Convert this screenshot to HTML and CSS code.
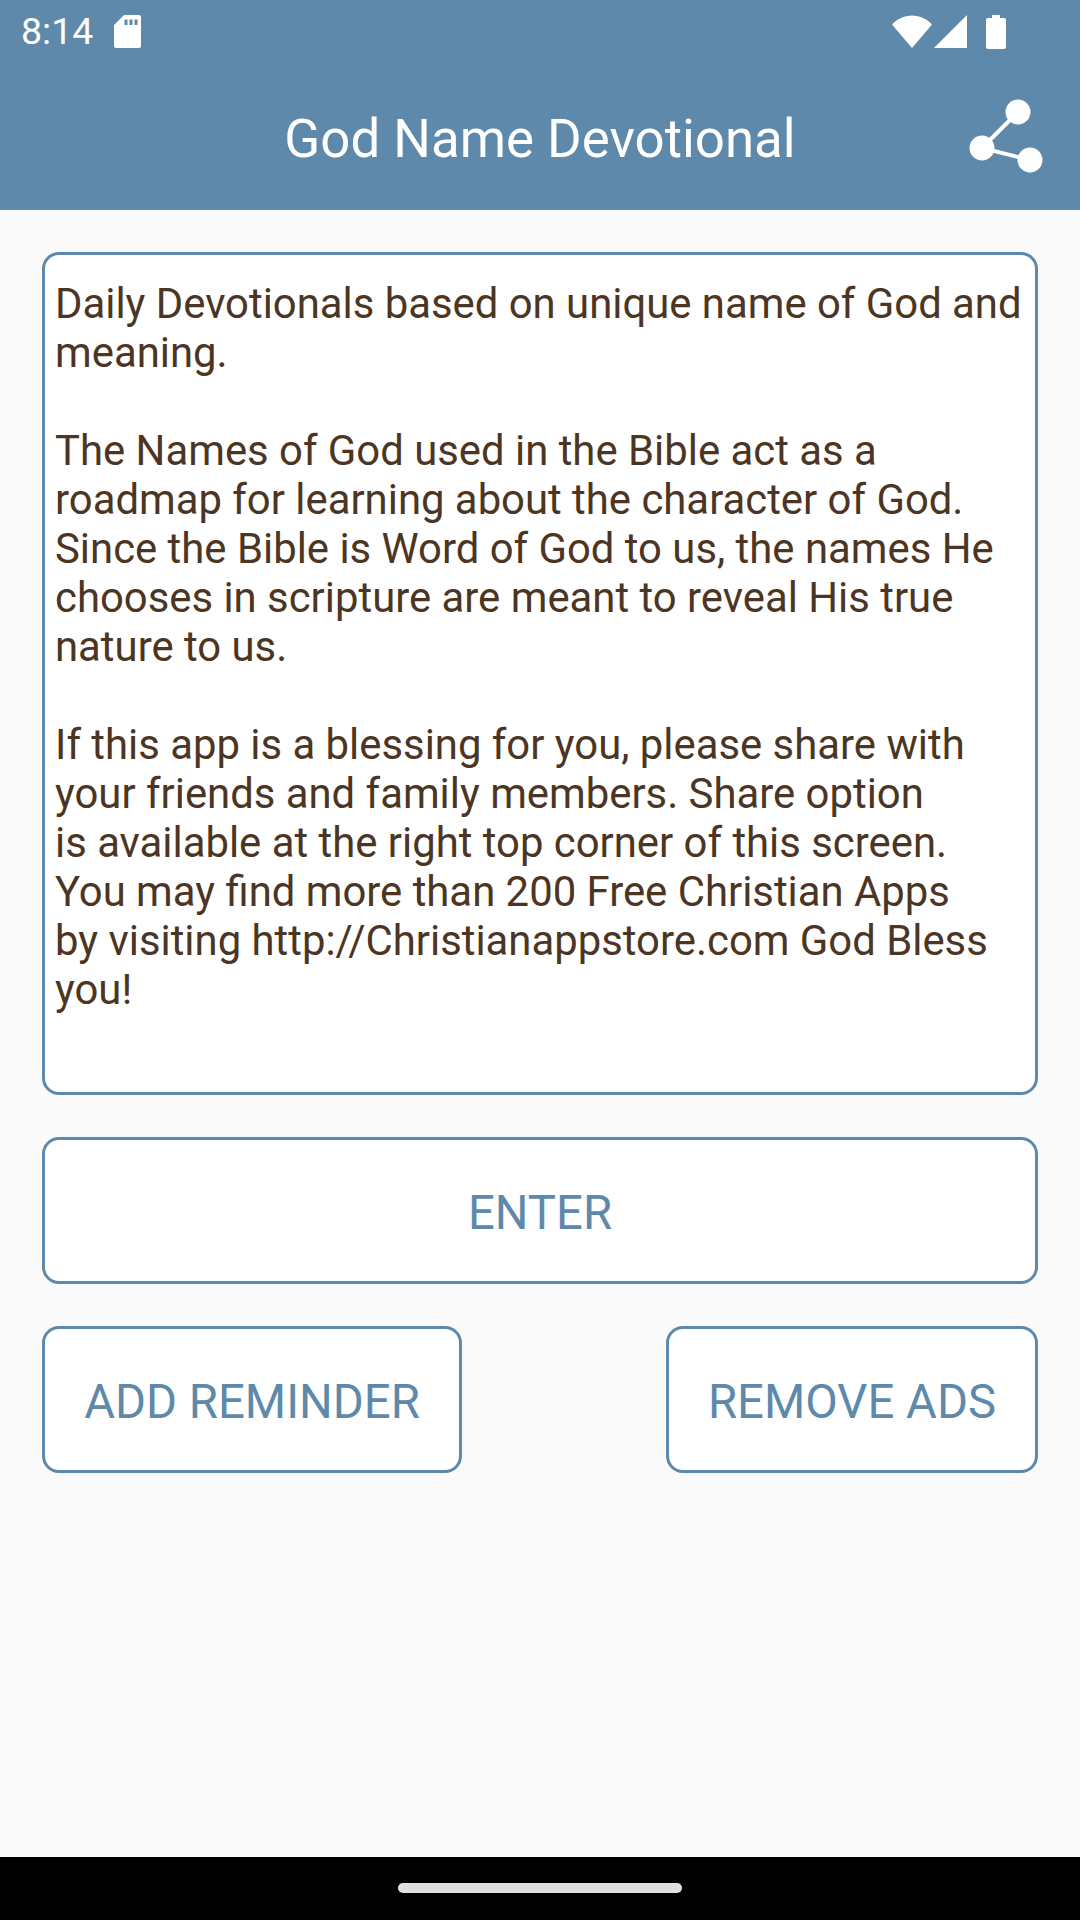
FILE: index.html
```html
<!DOCTYPE html>
<html lang="en">
<head>
<meta charset="utf-8">
<title>God Name Devotional</title>
<link rel="stylesheet" href="styles.css">
</head>
<body>
<div class="screen">
  <header class="appbar">
    <div class="status">
      <div class="status-left">
        <span class="time">8:14</span>
        <svg class="sd" viewBox="0 0 27 33"><path fill="#fff" fill-rule="evenodd" d="M10 0H25a2 2 0 0 1 2 2V31a2 2 0 0 1-2 2H2a2 2 0 0 1-2-2V10ZM10.500 4.500V10H13.500V4.500ZM15.500 4.500V10H18.500V4.500ZM20.500 4.500V10H23.500V4.500Z"/></svg>
      </div>
      <div class="status-right">
        <svg class="wifi" viewBox="0 0 40 33"><path fill="#fff" d="M0 9.500C5 4 12 .5 20 .5S35 4 40 9.500L20 33Z"/></svg>
        <svg class="signal" viewBox="0 0 33 33"><path fill="#fff" d="M33 0V33H0Z"/></svg>
        <svg class="battery" viewBox="0 0 20 34"><path fill="#fff" d="M6 0H14V3H18a2 2 0 0 1 2 2V32a2 2 0 0 1-2 2H2a2 2 0 0 1-2-2V5a2 2 0 0 1 2-2H6Z"/></svg>
      </div>
    </div>
    <div class="toolbar">
      <h1 class="title">God Name Devotional</h1>
      <svg class="share" viewBox="0 0 74 74"><g fill="#fff"><circle cx="49" cy="13" r="12.500"/><circle cx="13" cy="49" r="12.500"/><circle cx="61" cy="61" r="12.500"/></g><path stroke="#fff" stroke-width="4" d="M49 13 13 49 61 61" fill="none"/></svg>
    </div>
  </header>
  <main class="content">
    <section class="card">
      <p>Daily Devotionals based on unique name of God and meaning.</p>
      <p>The Names of God used in the Bible act as a<br>roadmap for learning about the character of God.<br>Since the Bible is Word of God to us, the names He<br>chooses in scripture are meant to reveal His true<br>nature to us.</p>
      <p>If this app is a blessing for you, please share with<br>your friends and family members. Share option<br>is available at the right top corner of this screen.<br>You may find more than 200 Free Christian Apps<br>by visiting http://Christianappstore.com God Bless<br>you!</p>
    </section>
    <button class="btn btn-wide">ENTER</button>
    <div class="btn-row">
      <button class="btn btn-add">ADD REMINDER</button>
      <button class="btn btn-remove">REMOVE ADS</button>
    </div>
  </main>
  <footer class="navbar"><span class="pill"></span></footer>
</div>
</body>
</html>
```
FILE: styles.css
```css
* { box-sizing: border-box; }
html, body { margin: 0; padding: 0; }
body { font-family: Roboto, sans-serif; background: #fafafa; }
.screen { width: 1080px; height: 1920px; display: flex; flex-direction: column; }
.appbar { height: 210px; background: #5e89aa; color: #fff; display: flex; flex-direction: column; }
.status { height: 63px; padding: 0 74px 0 21px; display: flex; justify-content: space-between; align-items: center; }
.status-left { display: flex; align-items: center; gap: 21px; }
.time { font-size: 37.500px; line-height: 63px; }
.sd { width: 27px; height: 33px; }
.status-right { display: flex; align-items: center; }
.wifi { width: 40px; height: 33px; margin-right: 2px; }
.signal { width: 33px; height: 33px; margin-right: 19px; }
.battery { width: 20px; height: 34px; }
.toolbar { flex: 1; position: relative; display: flex; align-items: center; justify-content: center; }
.title { margin: 5px 0 0; font-size: 52.800px; font-weight: 400; line-height: 142px; }
.share { position: absolute; right: 37px; top: 36px; width: 74px; height: 74px; }
.content { flex: 1; padding: 42px 42px 0; display: flex; flex-direction: column; gap: 42.500px; }
.card { height: 842.500px; background: #fff; border: 3px solid #5e89aa; border-radius: 17px; padding: 23.500px 10px; color: #4c3522; font-size: 41.850px; line-height: 49px; white-space: nowrap; }
.card p { margin: 0 0 49px; white-space: normal; }
.btn { height: 146.600px; background: #fff; border: 3px solid #5e89aa; border-radius: 17px; color: #5e89aa; font-family: Roboto, sans-serif; font-size: 47.300px; padding: 5px 0 0; }
.btn-wide { width: 100%; }
.btn-row { display: flex; justify-content: space-between; }
.btn-add { width: 420px; }
.btn-remove { width: 372px; }
.navbar { height: 63px; background: #000; display: flex; align-items: center; justify-content: center; padding-bottom: 1px; }
.pill { width: 284px; height: 10px; border-radius: 5px; background: #e0e0e0; }
```
